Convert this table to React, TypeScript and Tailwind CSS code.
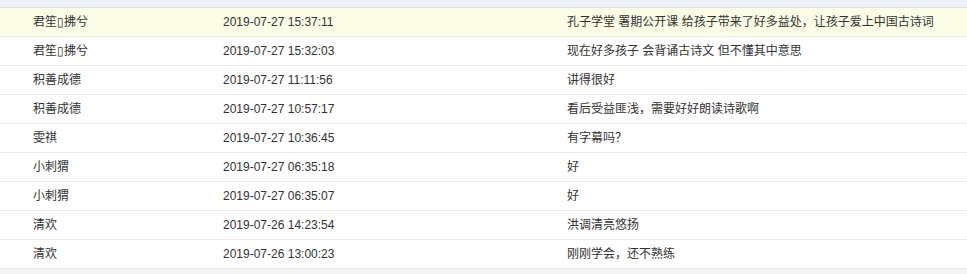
import React from "react";

interface IComment {
  name: string;
  time: string;
  text: string;
}

const comments: IComment[] = [
  { name: "君笙▯拂兮", time: "2019-07-27 15:37:11", text: "孔子学堂 署期公开课 给孩子带来了好多益处，让孩子爱上中国古诗词" },
  { name: "君笙▯拂兮", time: "2019-07-27 15:32:03", text: "现在好多孩子 会背诵古诗文 但不懂其中意思" },
  { name: "积善成德", time: "2019-07-27 11:11:56", text: "讲得很好" },
  { name: "积善成德", time: "2019-07-27 10:57:17", text: "看后受益匪浅，需要好好朗读诗歌啊" },
  { name: "雯祺", time: "2019-07-27 10:36:45", text: "有字幕吗？" },
  { name: "小刺猬", time: "2019-07-27 06:35:18", text: "好" },
  { name: "小刺猬", time: "2019-07-27 06:35:07", text: "好" },
  { name: "清欢", time: "2019-07-26 14:23:54", text: "洪调清亮悠扬" },
  { name: "清欢", time: "2019-07-26 13:00:23", text: "刚刚学会，还不熟练" },
];

export default function App() {
  return (
    <div
      className="w-[967px] h-[274px] bg-[#f5f5f5] text-[12px] text-[#333]"
      style={{ fontFamily: '"Liberation Sans", "Noto Sans CJK SC", sans-serif' }}
    >
      <div className="h-[8px] bg-[#eef1f6] border-b border-[#dde2e8]" />
      <div className="bg-white">
        {comments.map((c, i) => (
          <div
            key={i}
            className={
              "grid grid-cols-[190px_344px_1fr] pl-[33px] h-[29px] items-center border-b border-[#ebebeb] " +
              (i === 0 ? "bg-[#fbfde6]" : "bg-white")
            }
          >
            <span className="whitespace-nowrap">{c.name}</span>
            <span className="whitespace-nowrap">{c.time}</span>
            <span className="whitespace-nowrap">{c.text}</span>
          </div>
        ))}
      </div>
    </div>
  );
}
